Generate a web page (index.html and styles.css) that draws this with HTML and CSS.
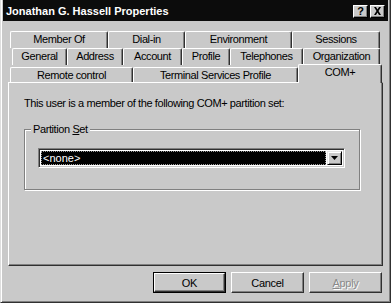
FILE: index.html
```html
<!DOCTYPE html>
<html lang="en">
<head>
    <meta charset="UTF-8">
    <title>Jonathan G. Hassell Properties</title>
    <link rel="stylesheet" href="styles.css">
</head>
<body>
    <div class="window">
        <div class="titlebar">
            <span class="title">Jonathan G. Hassell Properties</span>
            <div class="caption-btns">
                <span class="cap-btn">?</span>
                <span class="cap-btn">
                    <svg width="9" height="8" viewBox="0 0 9 8"><path d="M1 0h2l1.5 2.5L6 0h2L5.5 4 8 8H6L4.5 5.5 3 8H1l2.5-4z" fill="#000"/></svg>
                </span>
            </div>
        </div>

        <div class="client">
            <div class="tabs">
                <div class="tab-row row1">
                    <div class="tab w98">Member Of</div>
                    <div class="tab w77">Dial-in</div>
                    <div class="tab w107">Environment</div>
                    <div class="tab w88">Sessions</div>
                </div>
                <div class="tab-row row2">
                    <div class="tab w55">General</div>
                    <div class="tab w56">Address</div>
                    <div class="tab w59">Account</div>
                    <div class="tab w48">Profile</div>
                    <div class="tab w73">Telephones</div>
                    <div class="tab w77">Organization</div>
                </div>
                <div class="tab-row row3">
                    <div class="tab w123">Remote control</div>
                    <div class="tab w165">Terminal Services Profile</div>
                    <div class="tab w84 selected">COM+</div>
                </div>
            </div>

            <div class="panel">
                <p class="intro">This user is a member of the following COM+ partition set:</p>
                <fieldset class="group">
                    <legend>Partition <u>S</u>et</legend>
                    <div class="combo">
                        <div class="combo-value"><span class="focus">&lt;none&gt;</span></div>
                        <div class="combo-btn">
                            <svg width="7" height="4" viewBox="0 0 7 4"><path d="M0 0h7L3.5 4z" fill="#000"/></svg>
                        </div>
                    </div>
                </fieldset>
            </div>

            <div class="buttons">
                <div class="btn default"><span class="btn-face">OK</span></div>
                <div class="btn">Cancel</div>
                <div class="btn disabled"><u>A</u>pply</div>
            </div>
        </div>
    </div>
</body>
</html>
```

FILE: styles.css
```css
body {
    margin: 0;
    background-color: #c9c9c9;
    font-family: 'Liberation Sans', Arial, sans-serif;
    font-size: 11px;
    color: #000;
}

.window {
    width: 391px;
    height: 303px;
    box-sizing: border-box;
    background-color: #c9c9c9;
    border-left: 1px solid #dedede;
    border-right: 1px solid #303030;
    border-bottom: 1px solid #303030;
    padding: 0 2px 2px 2px;
    box-shadow: inset 1px 0 #ffffff, inset -1px -1px #808080;
}

/* Title bar */
.titlebar {
    height: 21px;
    background-color: #0c0c0c;
    display: flex;
    align-items: center;
    justify-content: space-between;
    padding: 0 3px 0 3px;
}

.title {
    color: #fff;
    font-weight: bold;
    font-size: 11px;
}

.caption-btns {
    display: flex;
    gap: 2px;
    margin-top: 1px;
}

.cap-btn {
    width: 15px;
    height: 13px;
    box-sizing: border-box;
    background-color: #c9c9c9;
    border-top: 1px solid #fff;
    border-left: 1px solid #fff;
    border-right: 1px solid #000;
    border-bottom: 1px solid #000;
    box-shadow: inset -1px -1px #808080;
    display: flex;
    align-items: center;
    justify-content: center;
    font-weight: bold;
    font-size: 11px;
    line-height: 11px;
}

/* Client area */
.client {
    padding: 0 5px;
}

.tabs {
    margin-top: 10px;
}

.tab-row {
    display: flex;
    height: 17px;
}

.row1, .row3 {
    padding-left: 2px;
}

.row2 {
    padding-left: 4px;
}

.tab {
    box-sizing: border-box;
    height: 17px;
    border-top: 1px solid #fff;
    border-left: 1px solid #fff;
    border-right: 1px solid #303030;
    border-top-left-radius: 2px;
    border-top-right-radius: 2px;
    box-shadow: inset -1px 0 #808080;
    background-color: #c9c9c9;
    text-align: center;
    line-height: 15px;
    letter-spacing: -0.4px;
    white-space: nowrap;
}

.row3 .tab {
    height: 15px;
    margin-top: 2px;
    line-height: 14px;
}

.row3 .tab.selected {
    height: 19px;
    margin-top: -1px;
    line-height: 15px;
    position: relative;
    z-index: 1;
}

.w48 { width: 48px; }
.w55 { width: 55px; }
.w56 { width: 56px; }
.w59 { width: 59px; }
.w73 { width: 73px; }
.w77 { width: 77px; }
.w84 { width: 84px; }
.w88 { width: 88px; }
.w98 { width: 98px; }
.w107 { width: 107px; }
.w123 { width: 123px; }
.w165 { width: 165px; }

/* Tab page */
.panel {
    height: 184px;
    box-sizing: border-box;
    border-top: 1px solid #fff;
    border-left: 1px solid #fff;
    border-right: 1px solid #303030;
    border-bottom: 1px solid #303030;
    box-shadow: inset -1px -1px #808080;
    padding: 13px 22px 0 15px;
}

.intro {
    margin: 0;
    line-height: 14px;
    letter-spacing: -0.4px;
}

/* Group box */
.group {
    margin: 12px 0 0 0;
    padding: 0 0 21px 13px;
    border: 1px solid #808080;
    box-shadow: inset 1px 1px #fff, 1px 1px #fff;
}

.group legend {
    margin-left: -7px;
    padding: 0 2px;
    background-color: #c9c9c9;
    line-height: 14px;
    letter-spacing: -0.4px;
}

/* Combo box */
.combo {
    margin-top: 12px;
    width: 307px;
    height: 20px;
    box-sizing: border-box;
    display: flex;
    background-color: #fff;
    border-top: 1px solid #808080;
    border-left: 1px solid #808080;
    border-right: 1px solid #fff;
    border-bottom: 1px solid #fff;
    box-shadow: inset 1px 1px #303030, inset -1px -1px #c9c9c9;
    padding: 2px 2px 2px 2px;
}

.combo-value {
    flex: 1;
    padding: 0 1px 0 0;
}

.focus {
    display: block;
    height: 14px;
    box-sizing: border-box;
    background-color: #000;
    color: #fff;
    border: 1px dotted #9a9a9a;
    line-height: 12px;
    padding-left: 1px;
}

.combo-btn {
    width: 15px;
    height: 14px;
    box-sizing: border-box;
    background-color: #c9c9c9;
    border-top: 1px solid #e8e8e8;
    border-left: 1px solid #e8e8e8;
    border-right: 1px solid #000;
    border-bottom: 1px solid #000;
    box-shadow: inset 1px 1px #fff, inset -1px -1px #808080;
    display: flex;
    align-items: center;
    justify-content: center;
}

/* Dialog buttons */
.buttons {
    display: flex;
    justify-content: flex-end;
    gap: 5px;
    margin-top: 6px;
    padding-right: 1px;
}

.btn {
    width: 73px;
    height: 21px;
    box-sizing: border-box;
    border-top: 1px solid #fff;
    border-left: 1px solid #fff;
    border-right: 1px solid #303030;
    border-bottom: 1px solid #303030;
    box-shadow: inset -1px -1px #808080;
    display: flex;
    align-items: center;
    justify-content: center;
    letter-spacing: -0.3px;
}

.btn.default {
    border: 1px solid #000;
    box-shadow: none;
    padding: 0;
}

.btn-face {
    flex: 1;
    align-self: stretch;
    display: flex;
    align-items: center;
    justify-content: center;
    border-top: 1px solid #fff;
    border-left: 1px solid #fff;
    border-right: 1px solid #303030;
    border-bottom: 1px solid #303030;
    box-shadow: inset -1px -1px #808080;
}

.btn.disabled {
    color: #8a8a8a;
    text-shadow: 1px 1px #fff;
}
```
